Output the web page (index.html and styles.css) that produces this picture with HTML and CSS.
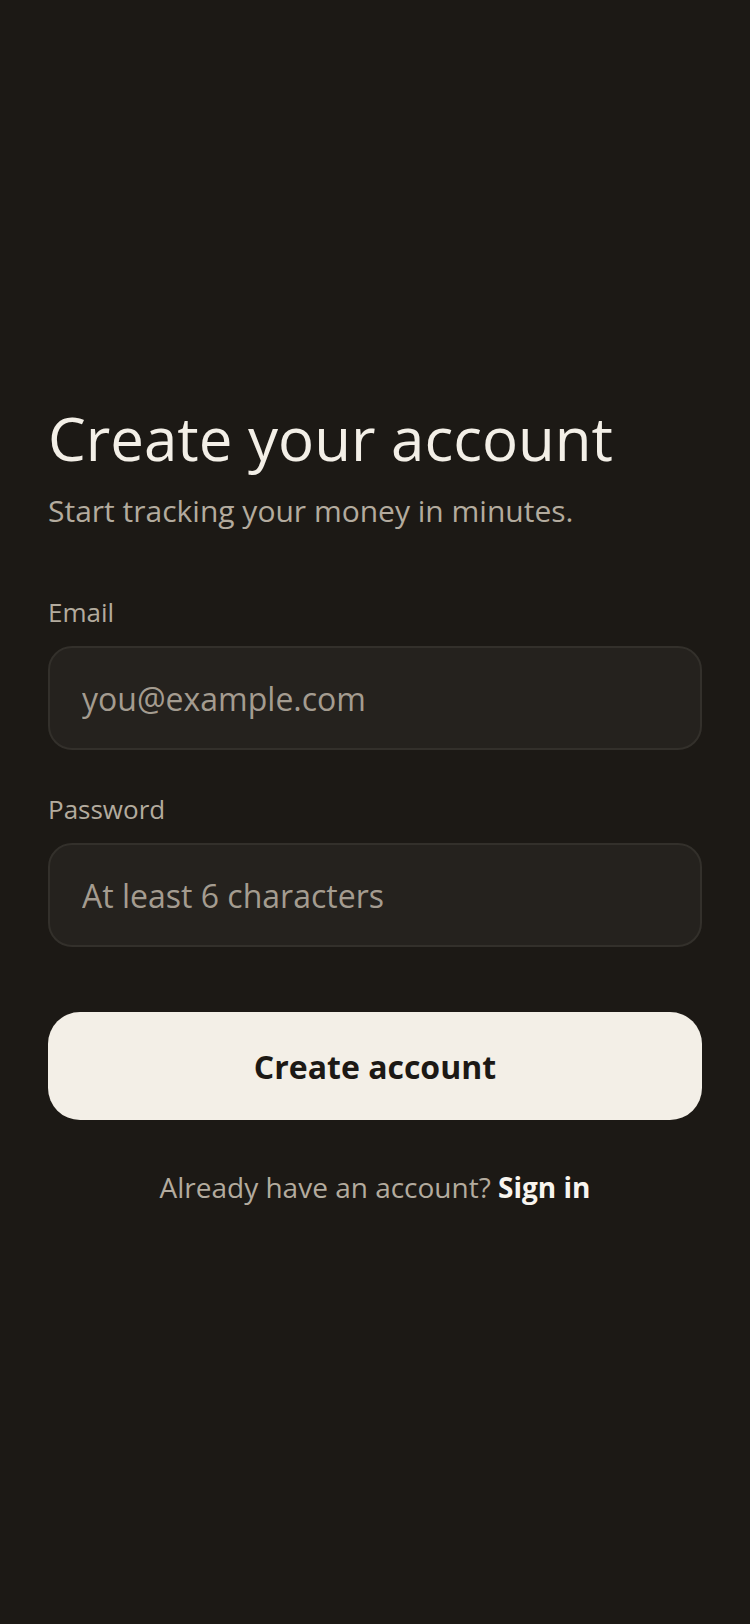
FILE: index.html
```html
<!DOCTYPE html>
<html lang="en">
<head>
<meta charset="utf-8">
<meta name="viewport" content="width=device-width, initial-scale=1">
<title>Create your account</title>
<link rel="stylesheet" href="styles.css">
</head>
<body>
<main class="screen">
  <h1 class="title">Create your account</h1>
  <p class="subtitle">Start tracking your money in minutes.</p>
  <form class="form">
    <label class="field">
      <span class="label">Email</span>
      <input class="input" type="email" placeholder="you@example.com">
    </label>
    <label class="field">
      <span class="label">Password</span>
      <input class="input" type="password" placeholder="At least 6 characters">
    </label>
    <button class="primary" type="button">Create account</button>
  </form>
  <p class="switch">Already have an account? <a class="switch-link" href="#">Sign in</a></p>
</main>
</body>
</html>
```
FILE: styles.css
```css
html, body {
  margin: 0;
  padding: 0;
  background: #1c1915;
}
body {
  font-family: "Open Sans", "Noto Sans", sans-serif;
  color: #f3efe7;
}
.screen {
  min-height: 1624px;
  box-sizing: border-box;
  padding: 0 48px 16px;
  display: flex;
  flex-direction: column;
  justify-content: center;
}
.title {
  margin: 0;
  font-size: 60px;
  font-weight: 400;
  line-height: 72px;
  color: #f3efe7;
}
.subtitle {
  margin: 17px 0 0;
  font-size: 30px;
  line-height: 40px;
  color: #b3ab9e;
}
.form {
  margin-top: 64px;
  display: flex;
  flex-direction: column;
}
.field {
  display: flex;
  flex-direction: column;
  gap: 17px;
  margin-bottom: 42px;
}
.label {
  font-size: 26px;
  line-height: 34px;
  color: #b3ab9e;
}
.input {
  box-sizing: border-box;
  height: 104px;
  padding: 0 32px;
  background: #25221e;
  border: 2px solid #33302b;
  border-radius: 24px;
  font-family: inherit;
  font-size: 32px;
  color: #f3efe7;
  outline: none;
}
.input::placeholder {
  color: #a49c90;
}
.primary {
  margin-top: 23px;
  height: 108px;
  border: 0;
  border-radius: 32px;
  background: #f3efe7;
  color: #1c1915;
  font-family: inherit;
  font-size: 32px;
  font-weight: 700;
}
.switch {
  margin: 48px 0 0;
  text-align: center;
  font-size: 28px;
  line-height: 38px;
  color: #b3ab9e;
}
.switch-link {
  color: #f8f5ef;
  font-weight: 700;
  text-decoration: none;
}
```
